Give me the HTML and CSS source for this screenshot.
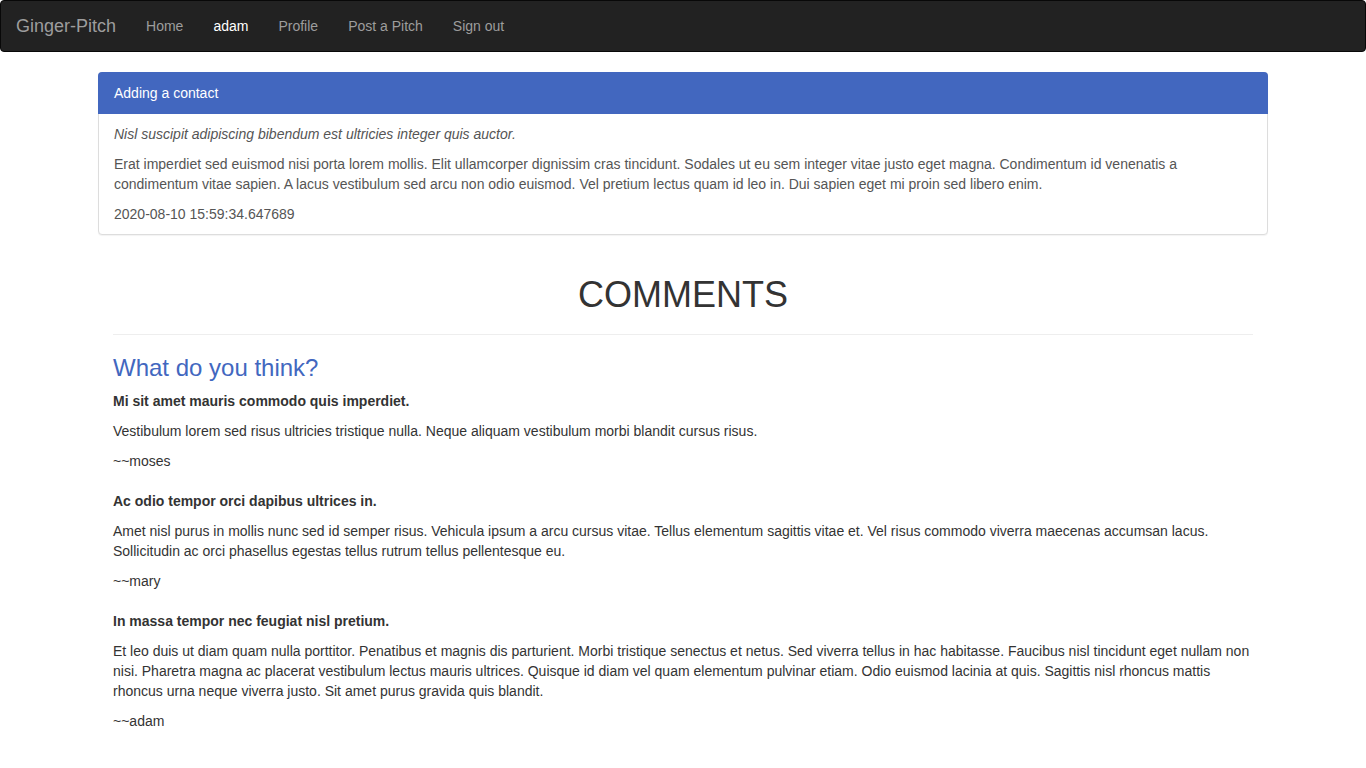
FILE: index.html
```html
<!DOCTYPE html>
<html lang="en">
<head>
<meta charset="utf-8">
<title>Ginger-Pitch</title>
<link rel="stylesheet" href="styles.css">
</head>
<body>
<nav class="navbar">
  <a class="brand" href="#">Ginger-Pitch</a>
  <ul class="nav">
    <li><a href="#">Home</a></li>
    <li><a class="active" href="#">adam</a></li>
    <li><a href="#">Profile</a></li>
    <li><a href="#">Post a Pitch</a></li>
    <li><a href="#">Sign out</a></li>
  </ul>
</nav>
<main class="container">
  <section class="panel">
    <div class="panel-heading">Adding a contact</div>
    <div class="panel-body">
      <p class="pitch-title">Nisl suscipit adipiscing bibendum est ultricies integer quis auctor.</p>
      <p>Erat imperdiet sed euismod nisi porta lorem mollis. Elit ullamcorper dignissim cras tincidunt. Sodales ut eu sem integer vitae justo eget magna. Condimentum id venenatis a condimentum vitae sapien. A lacus vestibulum sed arcu non odio euismod. Vel pretium lectus quam id leo in. Dui sapien eget mi proin sed libero enim.</p>
      <p>2020-08-10 15:59:34.647689</p>
    </div>
  </section>
  <section class="comments">
    <div class="page-header"><h1>COMMENTS</h1></div>
    <h3 class="think">What do you think?</h3>
    <div class="comment">
      <p><strong>Mi sit amet mauris commodo quis imperdiet.</strong></p>
      <p>Vestibulum lorem sed risus ultricies tristique nulla. Neque aliquam vestibulum morbi blandit cursus risus.</p>
      <p>~~moses</p>
    </div>
    <div class="comment">
      <p><strong>Ac odio tempor orci dapibus ultrices in.</strong></p>
      <p>Amet nisl purus in mollis nunc sed id semper risus. Vehicula ipsum a arcu cursus vitae. Tellus elementum sagittis vitae et. Vel risus commodo viverra maecenas accumsan lacus. Sollicitudin ac orci phasellus egestas tellus rutrum tellus pellentesque eu.</p>
      <p>~~mary</p>
    </div>
    <div class="comment">
      <p><strong>In massa tempor nec feugiat nisl pretium.</strong></p>
      <p>Et leo duis ut diam quam nulla porttitor. Penatibus et magnis dis parturient. Morbi tristique senectus et netus. Sed viverra tellus in hac habitasse. Faucibus nisl tincidunt eget nullam non nisi. Pharetra magna ac placerat vestibulum lectus mauris ultrices. Quisque id diam vel quam elementum pulvinar etiam. Odio euismod lacinia at quis. Sagittis nisl rhoncus mattis rhoncus urna neque viverra justo. Sit amet purus gravida quis blandit.</p>
      <p>~~adam</p>
    </div>
  </section>
</main>
</body>
</html>
```

FILE: styles.css
```css
* { box-sizing: border-box; }
html, body { margin: 0; padding: 0; }
body {
  font-family: "Liberation Sans", Arial, Helvetica, sans-serif;
  font-size: 14px;
  line-height: 20px;
  color: #333;
  background: #fff;
}
a { text-decoration: none; }
p { margin: 0 0 10px; }

.navbar {
  display: flex;
  align-items: stretch;
  height: 52px;
  background: #222;
  border: 1px solid #080808;
  border-radius: 4px;
  margin-bottom: 20px;
  padding: 0 15px 0 0;
}
.brand {
  display: block;
  padding: 15px;
  font-size: 18px;
  line-height: 20px;
  height: 50px;
  color: #9d9d9d;
}
.nav {
  display: flex;
  list-style: none;
  margin: 0;
  padding: 0;
}
.nav a {
  display: block;
  padding: 15px;
  line-height: 20px;
  color: #9d9d9d;
}
.nav a.active { color: #fff; }

.container {
  width: 1170px;
  margin: 0 auto;
}

.panel {
  border: 1px solid #ddd;
  border-radius: 4px;
  margin-bottom: 20px;
  background: #fff;
  box-shadow: 0 1px 1px rgba(0,0,0,.05);
}
.panel-heading {
  background: #4267bf;
  color: #fff;
  margin: -1px -1px 0;
  padding: 11px 16px 10px;
  height: 42px;
  border-top-left-radius: 4px;
  border-top-right-radius: 4px;
}
.panel-body {
  padding: 10px 15px 0;
  color: #555;
}
.pitch-title { font-style: italic; }

.comments {
  padding: 0 15px;
}
.page-header {
  margin: 40px 0 20px;
  padding-bottom: 9px;
  border-bottom: 1px solid #eee;
}
.page-header h1 {
  margin: 20px 0 10px;
  font-size: 36px;
  font-weight: 500;
  line-height: 1.1;
  text-align: center;
  color: #333;
}
.think {
  margin: 20px 0 10px;
  font-size: 24px;
  font-weight: 500;
  line-height: 1.1;
  color: #4267bf;
}
.comment { margin-bottom: 20px; }
```
